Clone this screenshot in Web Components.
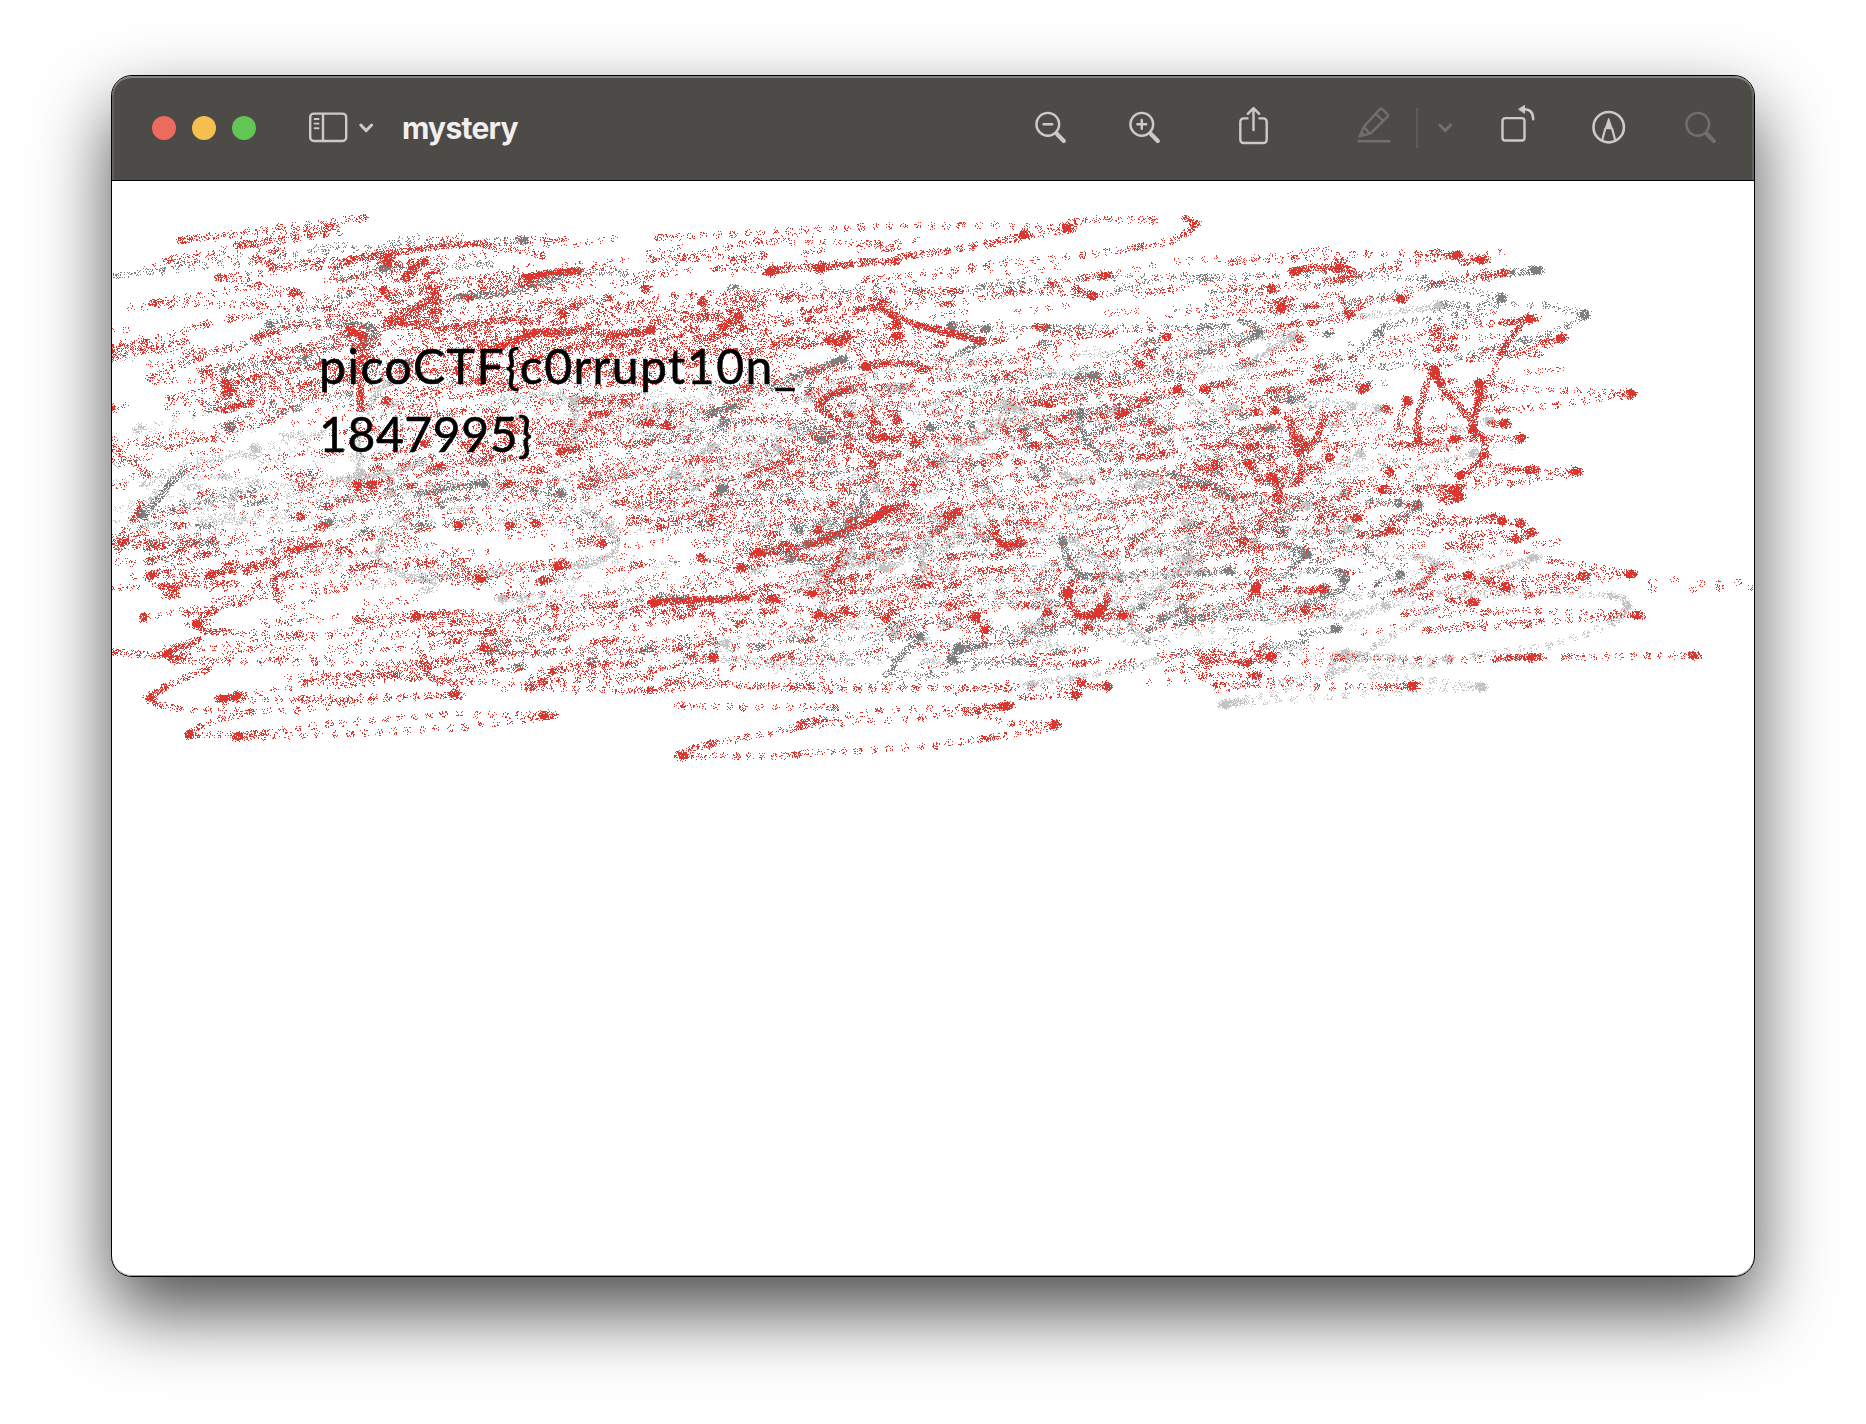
<!DOCTYPE html>
<html lang="en">
<head>
<meta charset="utf-8">
<title>mystery</title>
<style>
html,body{margin:0;background:#fff}
body{width:1866px;height:1424px;overflow:hidden}
</style>
</head>
<body>
<preview-window>
  <window-bar slot="bar" label="mystery"></window-bar>
  <spray-picture><picture-caption><span style="letter-spacing:1.55px">picoCTF{c0rrupt10n_</span><br><span style="letter-spacing:.6px">1847995}</span></picture-caption></spray-picture>
</preview-window>
<script>
const shadow = (el, html) => { const r = el.attachShadow({mode:'open'}); r.innerHTML = html; return r; };

class PreviewWindow extends HTMLElement {
  connectedCallback() {
    shadow(this, `<style>
      :host{display:block;box-sizing:border-box;padding:75px 111px 0}
      .frame{box-sizing:border-box;width:1644px;height:1202px;border:1px solid #000;border-radius:21px;overflow:hidden;
        background:#fff;box-shadow:0 34px 74px rgba(0,0,0,.7);display:flex;flex-direction:column}
      .body{flex:1;min-height:0;box-shadow:inset 0 -1px #999;border-radius:0 0 20px 20px;overflow:hidden}
    </style><div class="frame"><slot name="bar"></slot><div class="body"><slot></slot></div></div>`);
  }
}

class WindowBar extends HTMLElement {
  connectedCallback() {
    shadow(this, `<style>
      :host{display:flex;align-items:center;box-sizing:border-box;height:105px;flex:none;padding:0 36px 1px 40px;
        background:#4d4b48;border-radius:20px 20px 0 0;
        box-shadow:inset 0 -1px #000,inset 0 2px #858381,inset 2px 0 #646260,inset -2px 0 #646260}
      .lights{display:flex;gap:16px;margin-right:52px}
      .lights i{width:24px;height:24px;border-radius:50%}
      h1{margin:0 0 0 28px;font:700 30px/40px Inter,"Liberation Sans",sans-serif;letter-spacing:-.75px;color:#f0efee}
      .space{flex:1}
      .rule{width:2px;height:40px;background:#5d5b59;margin:0 19px 0 24px}
    </style>
    <div class="lights"><i style="background:#ed6a5e"></i><i style="background:#f5bf4f"></i><i style="background:#62c554"></i></div>
    <tool-icon name="sidebar"></tool-icon>
    <tool-icon name="chevron" style="margin-left:10px"></tool-icon>
    <h1>${this.getAttribute('label')}</h1>
    <div class="space"></div>
    <tool-icon name="minus"></tool-icon>
    <tool-icon name="plus" style="margin-left:60px"></tool-icon>
    <tool-icon name="share" style="margin-left:76px"></tool-icon>
    <tool-icon name="pencil" dim style="margin-left:86px"></tool-icon>
    <div class="rule"></div>
    <tool-icon name="chevron" dim></tool-icon>
    <tool-icon name="rotate" style="margin-left:47px"></tool-icon>
    <tool-icon name="markup" style="margin-left:55px"></tool-icon>
    <tool-icon name="search" dim style="margin-left:57px"></tool-icon>`);
  }
}

const LENS = '<circle cx="13.8" cy="20.3" r="11.4"/><path d="M23 30l6.8 7" stroke-width="4.2"/>';
const ICONS = {
  sidebar:[40,'<rect x="2.2" y="9.6" width="36" height="27.4" rx="3.6"/><path d="M15 10v27"/><path d="M6.6 15h4M6.6 19.6h4M6.6 24.2h4" stroke-width="1.9"/>'],
  chevron:[16,'<path d="M2.8 21l5.4 5.6 5.4-5.6" stroke-width="3"/>'],
  minus:[34, LENS + '<path d="M9.6 20.3h8.6"/>'],
  plus:[34, LENS + '<path d="M9.4 20.3h8.8M13.8 15.9v8.8"/>'],
  search:[34, LENS],
  share:[32,'<path d="M10.5 14.4H5.6a3.3 3.3 0 0 0-3.3 3.3v18a3.3 3.3 0 0 0 3.3 3.3h19.8a3.3 3.3 0 0 0 3.3-3.3v-18a3.3 3.3 0 0 0-3.3-3.3h-4.9" stroke-linecap="butt"/><path d="M15.5 26V4.2M9.8 9.8l5.7-5.7 5.7 5.7"/>'],
  pencil:[36,'<path d="M2.7 37.2h30.6"/><path d="M8.2 22.2L23.8 5.4q1.4-1.3 2.8 0l4.7 4.7q1.3 1.4 0 2.8L14.6 29.4 3.6 32.4zM19.8 9.6l7.4 7.4M8.2 22.2q.6 3.4 2.8 3.4.2 3 3.6 3.8"/><path d="M3.6 32.4l2.2-5 3.2 3.4z" fill="currentColor" stroke-width="1"/>'],
  rotate:[36,'<rect x="2.5" y="14.1" width="22" height="22.4" rx="2.8"/><path d="M24 5.2c6 0 9.2 3.6 9.2 10"/><path d="M18.9 5.1l5.6-3.7v7.5z" fill="currentColor" stroke-width="1"/>'],
  markup:[36,'<circle cx="17.7" cy="23.2" r="15.2" stroke-width="2.6"/><path d="M14.3 24.5l-3.1 11.8M21.1 24.5l3.1 11.8" stroke-width="2.2"/><path d="M17.7 14.6l3.4 10h-6.8z" fill="currentColor" stroke-width="1.2"/>']
};
class ToolIcon extends HTMLElement {
  connectedCallback() {
    const [w, art] = ICONS[this.getAttribute('name')];
    shadow(this, `<style>:host{display:block;flex:none;color:#cccac8}:host([dim]){color:#716f6d}svg{display:block}</style>
      <svg width="${w}" height="48" viewBox="0 0 ${w} 48" fill="none" stroke="currentColor" stroke-width="2.4" stroke-linecap="round" stroke-linejoin="round">${art}</svg>`);
  }
}

class PictureCaption extends HTMLElement {
  connectedCallback() {
    shadow(this, `<style>:host{display:block;font:400 48px/68px Lato,"Open Sans",sans-serif;color:#000;white-space:nowrap;-webkit-text-stroke:.6px #000}</style><slot></slot>`);
  }
}

/* Density of the spray: one digit per 50x20 cell, rows from y=190 */
const RED = `
00000000000 00000000000 00000000000
00000000000 00000000000 00000000000
00001010110 11101000000 00000000000
01122331111 11111011001 01111100000
00111333432 10001111211 22211100000
01012343333 44333211111 23211000000
00112343333 45333211111 12100110000
31123335555 55444322221 22112110000
11233445554 43322222122 22212110000
01333344443 33333322232 22221200000
11322233333 22243333433 33111200000
11111233444 33334233442 34322100000
11101233444 32244333322 44323100000
21111234333 33434432333 44211100000
10112333333 33334433223 44221210000
11112322123 44333333333 44311000000
11112122212 43233333222 53322200000
33232111112 11444233222 53232210000
12332222212 13233233222 22111100000
13332223211 22344433322 23111222100
01121101222 33233333222 23122110000
01111233333 33233332323 22111111000
01111123222 21211121111 10000000000
01111133333 22121111113 32110000000
00002212222 11111111101 11000000000`;
const LIGHT = `
00000000000 00000000000 00000000000
00000000000 00000000000 00000000000
00000000000 00000000000 00000000000
00000000000 00000000000 00000000000
00000000000 00000000000 00000000000
00000000000 00000000000 00011000000
00000000000 00000000000 00110000000
00000000000 00000000001 22000000000
10000000000 00000111112 11000000000
00000210001 11122121101 10000000000
00000111232 21122212111 10100000000
11100110232 11121113122 21220000000
10111111121 23311121121 11011100000
11221211112 33321221111 21120100000
12222222222 32122222332 12101000000
12311221121 22022121212 22100000000
11322111121 11112332212 31200000000
11011100011 01112332222 20110000000
00002100121 10234201323 10001100000
00000221211 01132322123 11001100000
00000000221 11111223223 12221110000
00000000000 01112111121 21210000000
00000000000 11111112111 11000000000
00000000000 11211110001 01110000000
00000000000 00000000000 11100000000`;
const DARK = `
00000000000 00000000000 00000000000
00000000000 00000000000 00000000000
00001110000 00000000000 00000000000
01111001000 00000000000 00000000000
10000010110 11111011121 11111000000
00001110110 00000001111 11011000000
00011110000 00000000110 01001100000
00011110000 00000121112 20110000000
00111110000 00111211121 11111000000
00011110000 01110110212 21010000000
00111110000 12110111221 11000000000
00110110000 12112111331 11000000000
01000000001 11121111322 21000000000
11000010001 01112111121 21000000000
10111122111 12221111122 11100000000
01122212211 12221111112 12210000000
11111122221 11331111111 12110000000
11110110001 01233111211 11110000000
01000000000 11112121221 22210000000
00000000001 11001111121 22100000000
00000000001 00000011112 22100000000
00000001000 01111111222 11100000000
00000001100 11110121111 11000000000
00000000111 01111111111 00000000000
00000000000 00011100000 00000000000`;

/* Hand-drawn strokes. z: quick zigzag that slows at each end, s: slow curve, b: held blob.
   Each group has an origin and a scale for its points. */
const GROUPS = [
[100,190,2.8,3,`
z d 35,257 170,243 630,182 870,160 1190,150
z d 670,268 800,230
z d 1000,322 1340,240 1470,248
z d 1090,222 800,232
s d 1000,320 1120,312 1200,290 1330,240
z d 470,402 640,395 760,410
s d 690,398 750,410 770,432 745,458 715,466
z d 345,540 640,470 740,458
z d 345,540 560,512 870,516
z d 350,708 480,640 700,610
s d 185,890 210,865 240,830
z d 470,400 700,310
s l 745,660 780,595 850,550
z l 1120,625 1240,603 1330,630
s l 1325,640 1330,700 1325,760
s l 650,870 800,850 920,810
z l 1470,640 1568,655
z l 120,880 440,775 620,730
s l 715,700 725,780 722,870
z r 220,150 500,110 740,82
z r 230,148 640,110
z r 380,165 630,132 400,162
z r 185,210 430,160 660,108
s r 655,245 680,215 780,192 860,182 960,165 1080,160
z r 1080,165 1240,195
z r 485,230 700,205 820,195
z r 435,200 485,230
z r 330,262 610,230 900,220
z r 330,260 560,310
z r 145,338 450,285
z r 145,338 460,345
z r 360,385 560,355 760,340
s r 930,290 940,330 930,370 940,395
s r 940,310 905,335 860,360 800,395
s r 945,320 915,345 870,370 810,405
s r 800,385 860,400 930,410
z r 935,300 1100,265 1340,240
s r 1180,265 1260,250 1340,240
s r 1190,258 1270,245 1335,238
z r 430,440 550,400 700,415
s r 430,445 455,435 490,420
s r 700,415 735,440 725,500 728,600 728,665
s r 726,600 728,665
z r 35,475 125,455 300,400
z r 35,500 240,450
z r 280,540 560,470 690,430
z r 135,565 280,500
z r 350,580 620,520
s r 340,580 370,600 340,620
s r 350,570 365,620
z r 350,612 700,560
z r 195,622 440,560
z r 370,650 600,600
s r 370,650 430,635
s r 850,260 890,220
s r 910,260 950,232
z r 800,400 1000,410 1200,430
s r 940,420 1040,400 1200,380
s r 1090,480 1140,460 1200,432 1330,425
s r 1190,425 1330,420 1440,430 1550,412
s r 1430,435 1550,425
z r 1120,470 1230,425
z r 190,775 360,720 480,690
z r 35,770 130,850
z r 560,880 760,880
s r 1280,785 1345,770
z r 1280,785 1380,670
z r 920,830 1100,800
z r 1350,630 1500,615
b r 805,205 0
b r 803,215 0
b r 875,240 0
b r 855,260 0
b r 792,300 0
b r 735,435 0
b r 705,425 0
b r 540,308 0
b r 1525,295 0
b r 1000,540 0
b r 1140,880 0
b r 800,630 0
b r 910,760 0
b r 1295,370 0
b d 365,708 0
b d 1185,150 0
b d 795,232 0
b l 430,775 0
b l 1325,630 0
b l 725,845 0
`],
[100,480,2.8,3,`
s d 195,5 170,45 140,80 112,100
z d 112,100 230,70 430,40
z d 45,198 150,190 320,185
z d 620,130 740,110 960,75
s d 880,40 980,22 1080,10
z d 1090,515 1250,520 1540,505
z d 1090,515 1250,440
z d 1290,40 1200,25
b d 112,100 0
b d 1070,10 0
b d 635,127 0
b d 1290,40 0
z l 285,128 400,120
s l 140,60 160,30
s l 375,30 365,90
s l 795,170 772,215 785,250 850,285 950,310
s l 1350,85 1410,125 1445,170 1440,215 1380,250 1300,262
z l 1110,355 1240,345
s l 815,0 815,50
z l 1130,275 900,290
b l 815,40 0
b l 1125,355 0
z r 90,115 235,90
s r 115,65 100,110
z r 40,185 160,185 320,180
s r 130,205 190,192
z r 300,220 150,280
s r 170,315 215,325 180,345
s r 180,345 225,348
z r 170,320 300,285 490,250
s r 300,285 380,265
z r 410,260 610,190
s r 530,210 610,190
z r 410,275 640,190 760,170
s r 700,265 760,252
z r 760,250 1020,262
z r 1050,295 1300,250
z r 1240,300 1310,255
s r 485,290 490,330 500,370
z r 240,400 400,365
s r 330,385 290,405 268,430 290,452 340,455
z r 340,455 640,465 1100,455
s r 280,478 215,500 185,522 205,540
z r 205,540 600,545 900,550
z r 185,520 560,460
z r 300,565 240,590 180,620
s r 180,620 140,650 160,672
z r 160,672 220,685 300,690 550,690 760,660 1000,640
s r 330,655 395,645
z r 330,655 400,645 700,590 820,580
z r 335,655 700,660
z r 625,590 720,580 830,585
z r 560,655 1010,645
z r 245,762 280,740 340,715 420,695
z r 245,765 460,760
z r 380,768 640,730 960,700 1260,705
z r 380,770 700,760 1020,740 1270,705
s r 900,520 912,560 915,585 950,600
z r 950,605 1240,605 1540,590
z r 910,560 1100,505
z r 1260,570 1420,548
z r 1200,625 1270,570
z r 1200,620 1540,630
z r 715,415 890,408 950,400
z r 920,460 1100,455
z r 1380,485 1440,475
z r 880,405 1180,410 1440,370
z r 1490,390 1560,365
z r 40,515 105,520 170,525
b r 1145,135 0
b r 1000,135 0
b r 560,108 0
b r 1405,190 0
b r 1220,130 0
b r 720,15 0
b r 760,15 0
b r 62,185 0
b r 310,280 0
b r 140,285 0
b r 345,655 0
b r 380,648 0
b r 990,640 0
b r 1240,703 0
b r 120,410 0
b r 1065,295 0
b r 1240,300 0
b r 1280,257 0
b r 885,408 0
b r 1075,500 0
b r 270,430 0
b r 187,520 0
b r 250,762 0
b r 385,768 0
b r 140,650 0
`],
[650,190,2.8,3,`
z d 920,290 1040,280 1200,262 1568,262
z d 840,405 940,415 1110,412
s d 860,490 930,455
z d 1110,412 1568,408
s d 540,505 480,530 400,560
z d 400,560 340,590 270,625 210,650
s d 160,668 240,650
z d 205,690 480,715 400,710
z d 780,712 900,700
z d 470,750 500,750
z d 0,740 200,710
s d 1045,710 1050,750 1075,780
z d 1050,710 1200,670 1400,630
z d 1200,560 1250,560
s d 1205,650 1205,710 1230,770 1275,795
z d 1320,845 1470,850
s d 1460,855 1568,885
z d 870,600 1000,560 1250,555
z d 1300,560 1568,480
b d 845,405 0
b d 940,415 0
b d 540,505 0
b d 515,515 0
b d 1240,555 0
b d 205,695 0
b d 205,895 0
b d 785,712 0
b d 480,750 0
b d 175,665 0
z l 0,645 170,620 420,580
z l 440,610 720,590
s l 660,590 740,590
s l 1000,650 960,720 880,760 820,810 820,840
z l 970,650 1040,650 800,670
z l 1040,660 1140,690
z l 60,850 170,770
z l 270,860 360,770
z l 1110,550 1220,540
s l 560,640 575,690
b l 1010,645 0
b l 1020,655 0
b l 990,640 0
b l 700,590 0
b l 75,855 0
b l 295,820 0
b l 355,770 0
b l 180,770 0
b l 1160,855 0
b l 1370,885 0
b l 625,630 0
z r 20,140 230,130 590,110 870,105 1180,110
z r 85,200 300,150 640,160
z r 700,200 900,170 1180,115
z r 720,195 830,180 1060,132
z r 950,160 1050,135
z r 1180,95 1280,85 1410,90
s r 1490,82 1532,100 1505,122
z r 1505,125 1460,150 1370,170
z r 1370,170 1210,195 900,230 600,270
z r 180,235 480,220 690,212
z r 320,242 480,225 690,210
s r 330,242 380,236
s r 450,232 570,222
z r 330,242 460,230 690,212
z r 0,205 320,195
z r 420,325 680,300 870,300
z r 570,360 640,350 850,305
z r 1210,262 1290,252
z r 1000,300 1240,315
z r 1190,295 1240,315
s r 580,358 640,348 670,370 740,400 860,430 930,455
s r 740,402 830,428
s r 830,430 930,450
z r 350,465 540,450
z r 560,450 700,435
z r 0,400 160,380 310,340
z r 200,425 330,425
s r 600,530 680,518 745,520 785,545
s r 560,595 490,620 470,645 500,675 540,690
s r 545,598 490,622 474,645
z r 590,530 660,515
z r 440,600 720,590
z r 1200,435 1290,430
z r 1080,410 1110,410
z r 1110,590 1310,580
z r 1380,800 1440,790
z r 470,780 560,765
s r 270,855 340,825 400,810
z r 640,740 860,740
z r 550,700 640,705
z r 1290,620 1400,630
z r 1320,670 1370,640
z r 0,700 60,710
s r 1090,700 1130,750
s r 1030,712 1060,740
b r 335,245 0
b r 680,375 0
b r 690,400 0
b r 540,450 0
b r 525,455 0
b r 500,450 0
b r 930,452 0
b r 1238,317 0
b r 1445,440 0
b r 1370,520 0
b r 1270,255 0
b r 740,760 0
b r 200,410 0
b r 145,335 0
b r 1325,665 0
b r 1310,675 0
b r 1115,640 0
b r 1555,598 0
b r 0,420 0
b r 45,705 0
b r 245,380 0
b r 690,435 0
b r 1475,595 0
b r 620,820 0
b r 690,690 0
b r 475,235 0
b r 1165,112 0
b r 1045,132 0
b r 650,740 0
b r 620,740 0
b r 605,530 0
`],
[650,480,2.8,3,`
s d 600,30 595,70 570,110 540,140
z d 400,140 600,100
z d 560,160 440,185 380,235
s d 580,130 520,160 450,190
z d 400,230 480,250
s d 760,470 715,510 685,545 672,575
z d 660,580 780,580 1040,545
z d 390,475 740,470
s d 1155,180 1165,240 1190,275 1230,290
z d 1200,288 1320,295 1560,280
z d 860,500 1130,455
z d 840,535 860,500
s d 860,510 900,500 950,490
z d 840,540 1060,545
z d 1060,455 1280,410
z d 1395,450 1490,380
s d 1495,375 1500,415 1560,410
z d 30,345 100,355
b d 755,468 0
b d 1155,185 0
b d 415,148 0
b d 440,190 0
b d 200,25 0
b d 395,235 0
b d 870,502 0
b d 1430,415 0
b d 845,538 0
s l 565,190 565,220 540,250 500,290 485,330 485,380 500,400
s l 470,270 490,280
s l 840,130 790,160 765,190 762,270
z l 840,190 960,170
z l 840,130 1100,150
z l 560,245 690,220
z l 640,260 680,255
z l 650,265 840,200
s l 1060,330 1110,360 1118,390 1090,430 1040,460
s l 1495,120 1510,180 1510,240 1460,290 1400,350 1350,390 1345,440 1400,490
s l 1180,180 1240,225 1270,260 1265,320
z l 1290,290 1500,270
z l 560,430 690,460
z l 180,490 440,440
z l 90,540 240,540 560,545
z l 1060,612 1250,580 1420,540
z l 1070,610 1200,590
b l 1065,612 0
b l 1310,290 0
b l 1510,235 0
b l 590,248 0
b l 660,262 0
b l 475,275 0
b l 210,490 0
b l 685,460 0
b l 630,20 0
b l 490,120 0
b l 765,260 0
b l 1500,125 0
s r 715,70 665,85 625,115 590,125
s r 690,78 655,90 610,125
z r 600,130 720,75
s r 620,120 540,155 470,185
z r 470,185 390,210
s r 280,225 350,212 400,208
z r 250,265 350,210 500,180
s r 540,210 520,250 485,300
z r 700,105 860,95
s r 855,90 830,135 780,165
s r 970,130 965,165 985,195 1040,190
s r 975,188 1040,185
s r 0,370 80,362 150,358 280,350
s r 0,365 90,360 200,355
s r 310,360 360,358
z r 0,370 160,355 370,360
z r 460,400 560,392
z r 440,340 570,330
s r 750,315 800,312
s r 830,320 870,305
s r 1180,300 1165,340 1170,370 1200,405 1250,395 1275,365
s r 1275,370 1285,330
s r 1190,405 1250,408
z r 1190,405 1340,405
z r 1150,340 1240,325
z r 900,405 950,450
z r 20,140 180,80
z r 1340,200 1440,110
z r 70,505 180,480
z r 0,570 180,530
z r 350,530 400,520
z r 1070,550 1210,548
z r 0,630 200,610 400,625 580,620 880,620 1280,618
z r 80,605 300,615 500,630 740,625 1000,625
z r 430,725 480,715
z r 420,730 640,690 1010,675
z r 420,735 760,712 1000,678
z r 910,690 1010,675
z r 880,690 1010,728 1140,730
z r 75,825 120,805 175,785
z r 160,795 270,770 420,740
z r 90,825 240,828 410,825
z r 410,820 580,810 800,795 960,770
z r 930,775 1060,755 1140,735
z r 1040,650 1200,640
z r 80,675 260,680 520,680
b r 255,260 0
b r 470,150 0
b r 1170,345 0
b r 1170,335 0
b r 1255,395 0
b r 1250,400 0
b r 1265,385 0
b r 15,365 0
b r 860,95 0
b r 1000,198 0
b r 1035,190 0
b r 175,532 0
b r 1205,605 0
b r 1280,618 0
b r 1130,732 0
b r 92,825 0
b r 990,678 0
b r 140,232 0
b r 1110,395 0
b r 660,415 0
b r 935,450 0
b r 300,215 0
b r 655,90 0
b r 640,105 0
b r 545,388 0
b r 470,402 0
b r 455,338 0
b r 345,355 0
b r 910,410 0
b r 1190,643 0
b r 1225,440 0
b r 1320,405 0
b r 830,105 0
`],
[1200,190,2.751,3,`
z d 0,410 70,405
s d 110,390 150,405 170,425 120,455
z d 120,455 60,470 0,485
z d 490,430 440,480 330,530
z d 200,625 280,625
z d 0,260 300,250 620,265
z d 400,340 620,290 935,240
z d 850,245 935,240
z d 640,280 830,320
z d 830,325 700,375 500,410
z d 670,340 730,345 950,345 1060,370
z d 1060,372 1010,405 960,430 890,450
z d 890,450 710,500 500,530
z d 0,710 200,712
b d 830,325 0
b d 1058,372 0
b d 155,425 0
b d 920,240 0
b d 250,628 0
b d 190,715 0
b d 487,428 0
z l 0,460 260,430
s l 255,435 210,470 160,500
z l 160,500 110,530
z l 440,380 560,360 675,345
z l 0,660 100,650
z l 340,630 510,655
z l 700,720 800,690
z l 600,830 750,790
z l 380,830 440,790
b l 655,345 0
b l 255,435 0
b l 490,655 0
b l 415,650 0
b l 440,790 0
b l 795,692 0
b l 752,788 0
b l 90,655 0
s r 250,245 310,230 390,230 425,243 380,275
z r 250,245 400,230
s r 205,360 240,340
z r 220,360 390,330 560,325
z r 300,400 400,370 440,345
z r 80,215 260,205 460,190 600,190 710,195
z r 640,185 710,195
z r 720,215 790,208
z r 640,280 840,245
z r 780,258 840,248
z r 640,410 800,400 925,382
s r 830,398 880,392 925,382
s r 880,405 850,445 825,490
z r 830,480 800,560 770,620
z r 640,440 700,438
z r 650,475 700,472
z r 740,505 930,490
z r 850,490 990,445
z r 940,455 1000,442
s r 645,530 622,580 608,640 595,690 600,750
s r 645,530 650,570 680,610 720,655 745,690 750,725
s r 768,575 765,630 755,680 750,725
s r 770,575 765,620 758,660
s r 640,530 655,560 668,590
s r 560,765 620,755
s r 750,720 780,740 783,780 765,820 710,855
z r 780,745 890,745
z r 830,595 1000,600 1190,610
z r 820,660 980,645 1190,610
z r 800,700 845,700
z r 840,840 1045,842
z r 710,855 925,835
z r 760,820 925,840
z r 850,880 1040,845
z r 540,710 570,630
s r 300,575 365,560
s r 190,600 245,597
z r 0,595 80,575
z r 240,680 270,790
s r 250,700 255,750 275,790
z r 275,790 270,870
s r 340,680 320,740 300,770
z r 300,770 270,870
z r 440,600 460,590
z r 0,830 130,820 190,800
s r 150,860 210,858
z r 600,890 710,892
z r 690,745 760,745
b r 265,243 0
b r 380,235 0
b r 905,385 0
b r 645,540 0
b r 645,555 0
b r 750,722 0
b r 600,748 0
b r 765,578 0
b r 510,657 0
b r 570,630 0
b r 700,745 0
b r 835,697 0
b r 880,743 0
b r 905,838 0
b r 990,443 0
b r 770,208 0
b r 705,195 0
b r 1185,610 0
b r 408,370 0
b r 550,325 0
b r 225,350 0
b r 450,592 0
b r 355,800 0
b r 520,843 0
b r 715,855 0
b r 270,745 0
b r 285,770 0
b r 195,295 0
b r 205,660 0
b r 130,818 0
b r 40,825 0
b r 1030,842 0
b r 195,858 0
`],
[1200,480,2.751,3,`
s d 0,10 40,15 70,45 100,65
z d 460,60 600,70
s d 600,65 600,85 560,105
z d 560,105 440,165 350,185
s d 220,190 270,205 298,220 260,250 240,270
z d 0,275 90,270
z d 300,270 390,275
s d 380,270 400,295 390,325 340,350
z d 340,350 290,370
z d 450,210 550,275 480,310
z d 280,460 380,445
z d 170,500 290,485
z d 0,415 180,410
b d 545,68 0
b d 598,75 0
b d 75,270 0
b d 293,222 0
b d 398,295 0
b d 550,285 0
b d 370,445 0
z l 270,160 410,145
z l 250,80 300,75
s l 590,228 635,240 650,260 620,300 580,335
z l 430,400 580,335
z l 350,210 600,225
s l 930,230 880,245 830,265
z l 830,265 770,290 660,340 400,415
z l 720,340 900,335 1130,345
s l 1130,345 1165,355 1175,380 1155,410
z l 1155,410 1130,430 1060,460 960,495 750,525
z l 640,390 590,430 530,465 475,500
s l 355,590 358,560 375,525 400,515 450,525
z l 450,525 540,535
z l 370,575 440,535
z l 400,530 560,530 690,535
z l 60,670 200,640 400,570 640,550
z l 60,672 400,645 780,620
z l 470,585 640,600 780,620
s l 60,672 90,668 130,662
b l 400,520 0
b l 395,40 0
b l 145,185 0
b l 405,145 0
b l 290,75 0
b l 510,375 0
b l 340,330 0
b l 915,232 0
b l 680,535 0
b l 770,620 0
b l 70,672 0
b l 1172,375 0
b l 645,255 0
z r 400,30 510,25 720,20
z r 520,35 710,40
z r 660,50 720,48
s r 220,0 215,60
z r 215,60 190,100 160,140
z r 205,0 210,50
z r 320,120 440,110
z r 440,165 545,150
z r 640,130 830,120 890,130
z r 680,195 880,175 915,155
z r 720,170 920,155
z r 530,115 660,110 830,120
z r 165,200 160,260 150,330
s r 150,340 165,300
z r 680,290 740,285
z r 780,300 1060,285 1190,280
z r 960,240 1080,260 1190,280
z r 900,345 1000,310 1065,285
z r 790,310 850,320
z r 680,355 760,365
z r 560,400 760,365
z r 780,395 930,390 1140,400 1215,405
z r 620,450 780,440 900,430 1130,410
z r 240,385 340,380
z r 270,330 350,325
z r 130,545 200,525
z r 0,520 90,525
z r 0,540 200,540
z r 370,530 600,540 810,535 940,530
s r 820,533 900,530 940,528
z r 1370,525 1230,525 1000,530
z r 0,585 160,585
z r 40,610 320,620 590,615
z r 500,620 600,615
z r 640,270 600,320
p r 1245,305 0
p r 1243,325 0
p r 1305,298 0
p r 1355,327 0
p r 1378,308 0
p r 1427,312 0
p r 1428,325 0
p r 1480,305 0
p r 1515,322 0
b r 430,113 0
b r 520,147 0
b r 830,122 0
b r 880,130 0
b r 905,155 0
b r 865,175 0
b r 735,285 0
b r 1050,287 0
b r 1182,282 0
b r 840,318 0
b r 748,365 0
b r 1198,405 0
b r 290,388 0
b r 335,325 0
b r 195,527 0
b r 1355,525 0
b r 910,530 0
b r 580,617 0
b r 155,585 0
b r 695,30 0
b r 710,50 0
b r 500,28 0
b r 120,180 0
b r 150,325 0
`]];

class SprayPicture extends HTMLElement {
  connectedCallback() {
    const root = shadow(this, `<style>
      :host{display:grid;width:1642px;height:1095px}
      canvas{grid-area:1/1;display:block}
      .text{grid-area:1/1;padding:151px 0 0 207px}
    </style><canvas width="1642" height="1095"></canvas><div class="text"><slot></slot></div>`);
    this.paint(root.querySelector('canvas').getContext('2d'));
  }
  paint(g) {
    let seed = 90210;
    const rnd = () => { seed = seed + 0x6D2B79F5 | 0; let t = Math.imul(seed ^ seed >>> 15, 1 | seed); t = t + Math.imul(t ^ t >>> 7, 61 | t) ^ t; return ((t ^ t >>> 14) >>> 0) / 4294967296; };
    const COLORS = {r:'#da3731', d:'#7f7f7f', l:'#c3c3c3'};
    g.translate(-112, -181);
    const stamp = (x, y, n, rad) => {
      for (let i = 0; i < n; i++) {
        const a = rnd() * 6.2832, r = Math.sqrt(rnd()) * rad;
        g.fillRect(Math.round(x + Math.cos(a) * r), Math.round(y + Math.sin(a) * r * .9), 1, 1);
      }
    };
    const field = (map, key, unit) => {
      g.fillStyle = COLORS[key];
      map.trim().split('\n').forEach((row, j) => [...row.replace(/ /g, '')].forEach((ch, i) => {
        const want = Math.pow(+ch, 1.35) * unit, n = Math.floor(want + rnd());
        for (let k = 0; k < n; k++) {
          const x = 100 + (i + rnd()) * 50, y = 190 + (j + rnd()) * 20, m = -(.04 + rnd() * .17);
          if (rnd() < .13) {
            const len = 5 + rnd() * 16;
            for (let s = 0; s < 6; s++) stamp(x + (s / 5 - .5) * len, y + (s / 5 - .5) * len * m, 10, 4.2);
          } else {
            const len = 18 + rnd() * 40;
            for (let s = 0; s < 4; s++) stamp(x + (s / 3 - .5) * len, y + (s / 3 - .5) * len * m, 9, 4.4);
          }
        }
      }));
    };
    const strokes = key => {
      g.fillStyle = COLORS[key];
      for (const [ox, oy, sx, sy, text] of GROUPS) for (const line of text.trim().split('\n')) {
        const [mode, col, ...raw] = line.trim().split(' ');
        if (col !== key) continue;
        const p = raw.filter(s => s.includes(',')).map(s => { const [a, b] = s.split(','); return [ox + a / sx, oy + b / sy]; });
        if (mode === 'p') { stamp(p[0][0], p[0][1], 12, 4.4); continue; }
        if (mode === 'b') { stamp(p[0][0], p[0][1], 85, 4.6); stamp(p[0][0] + 4 * rnd() - 2, p[0][1], 26, 7); continue; }
        for (let i = 0; i + 1 < p.length; i++) {
          const [x0, y0] = p[i], [x1, y1] = p[i + 1], len = Math.hypot(x1 - x0, y1 - y0);
          if (mode === 's') {
            const n = Math.max(2, Math.round(len / 2.6));
            for (let k = 0; k < n; k++) stamp(x0 + (x1 - x0) * k / n, y0 + (y1 - y0) * k / n, 13, 4.1);
          } else {
            const first = i === 0, last = i + 2 === p.length;
            const n = Math.max(2, Math.round(len / 15) + (first ? 3 : 0) + (last ? 3 : 0));
            for (let k = 0; k <= n; k++) {
              const t = k / n;
              let e = t;
              if (first && last) e = (1 - Math.cos(Math.PI * t)) / 2;
              else if (first) e = 1 - Math.cos(Math.PI / 2 * t);
              else if (last) e = Math.sin(Math.PI / 2 * t);
              stamp(x0 + (x1 - x0) * e, y0 + (y1 - y0) * e, 13, 4.5);
            }
          }
        }
      }
    };
    field(RED, 'r', .75);
    field(LIGHT, 'l', 1.15); strokes('l');
    field(DARK, 'd', .8); strokes('d');
    field(RED, 'r', .4); strokes('r');
  }
}

customElements.define('tool-icon', ToolIcon);
customElements.define('picture-caption', PictureCaption);
customElements.define('spray-picture', SprayPicture);
customElements.define('window-bar', WindowBar);
customElements.define('preview-window', PreviewWindow);
</script>
</body>
</html>
